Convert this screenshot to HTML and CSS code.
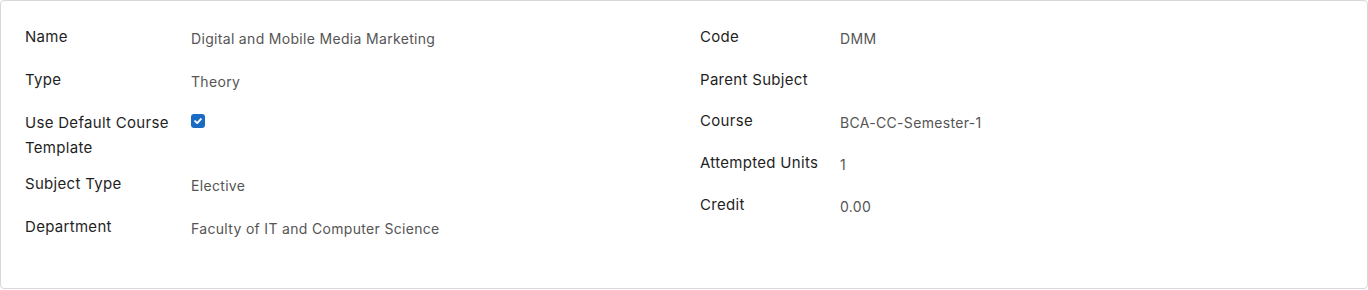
FILE: index.html
```html
<!DOCTYPE html>
<html lang="en">
<head>
  <meta charset="UTF-8">
  <title>Subject</title>
  <link rel="stylesheet" href="styles.css">
</head>
<body>
  <div class="sheet">
    <!-- left group -->
    <div class="group group-left">
      <div class="row">
        <div class="label">Name</div>
        <div class="value">Digital and Mobile Media Marketing</div>
      </div>
      <div class="row">
        <div class="label">Type</div>
        <div class="value">Theory</div>
      </div>
      <div class="row">
        <div class="label">Use Default Course Template</div>
        <div class="value value-check"><span class="check">
          <svg width="10" height="10" viewBox="0 0 10 10"><path d="M2.1 5.1 L4.2 7.1 L7.9 3.1" fill="none" stroke="#fff" stroke-width="1.9" stroke-linecap="round" stroke-linejoin="round"/></svg>
        </span></div>
      </div>
      <div class="row">
        <div class="label">Subject Type</div>
        <div class="value">Elective</div>
      </div>
      <div class="row">
        <div class="label">Department</div>
        <div class="value">Faculty of IT and Computer Science</div>
      </div>
    </div>

    <!-- right group -->
    <div class="group group-right">
      <div class="row">
        <div class="label">Code</div>
        <div class="value">DMM</div>
      </div>
      <div class="row">
        <div class="label">Parent Subject</div>
        <div class="value"></div>
      </div>
      <div class="row">
        <div class="label">Course</div>
        <div class="value">BCA-CC-Semester-1</div>
      </div>
      <div class="row">
        <div class="label">Attempted Units</div>
        <div class="value">1</div>
      </div>
      <div class="row">
        <div class="label">Credit</div>
        <div class="value">0.00</div>
      </div>
    </div>
  </div>
</body>
</html>
```

FILE: styles.css
```css
body {
  margin: 0;
  font-family: Inter, "Noto Sans", sans-serif;
  background: #fff;
}
.sheet {
  display: grid;
  grid-template-columns: 675px 1fr;
  height: 289px;
  box-sizing: border-box;
  padding: 13px 24px 0 24px;
  border: 1px solid #d8d8d8;
  border-radius: 4px;
  background: #fff;
}
.group {
  display: flex;
  flex-direction: column;
}
.row {
  display: grid;
  min-height: 43px;
}
.group-left .row {
  grid-template-columns: 166px 1fr;
}
.group-right .row {
  grid-template-columns: 140px 1fr;
  min-height: 42px;
}
.group-right .row:first-child {
  min-height: 43px;
}
.group-right .row:nth-child(2) {
  min-height: 41px;
}
.label {
  padding: 9.5px 12px 2px 0;
  font-size: 15px;
  line-height: 25px;
  letter-spacing: 0.3px;
  color: #1f1f1f;
}
.value {
  padding-top: 11.5px;
  font-size: 14px;
  line-height: 25px;
  letter-spacing: 0.32px;
  color: #555;
}
.value-check {
  padding-top: 9px;
}
.check {
  display: inline-flex;
  align-items: center;
  justify-content: center;
  width: 14px;
  height: 14px;
  border-radius: 3px;
  background: #1a6bc4;
  vertical-align: top;
  margin-top: 5px;
}
```
